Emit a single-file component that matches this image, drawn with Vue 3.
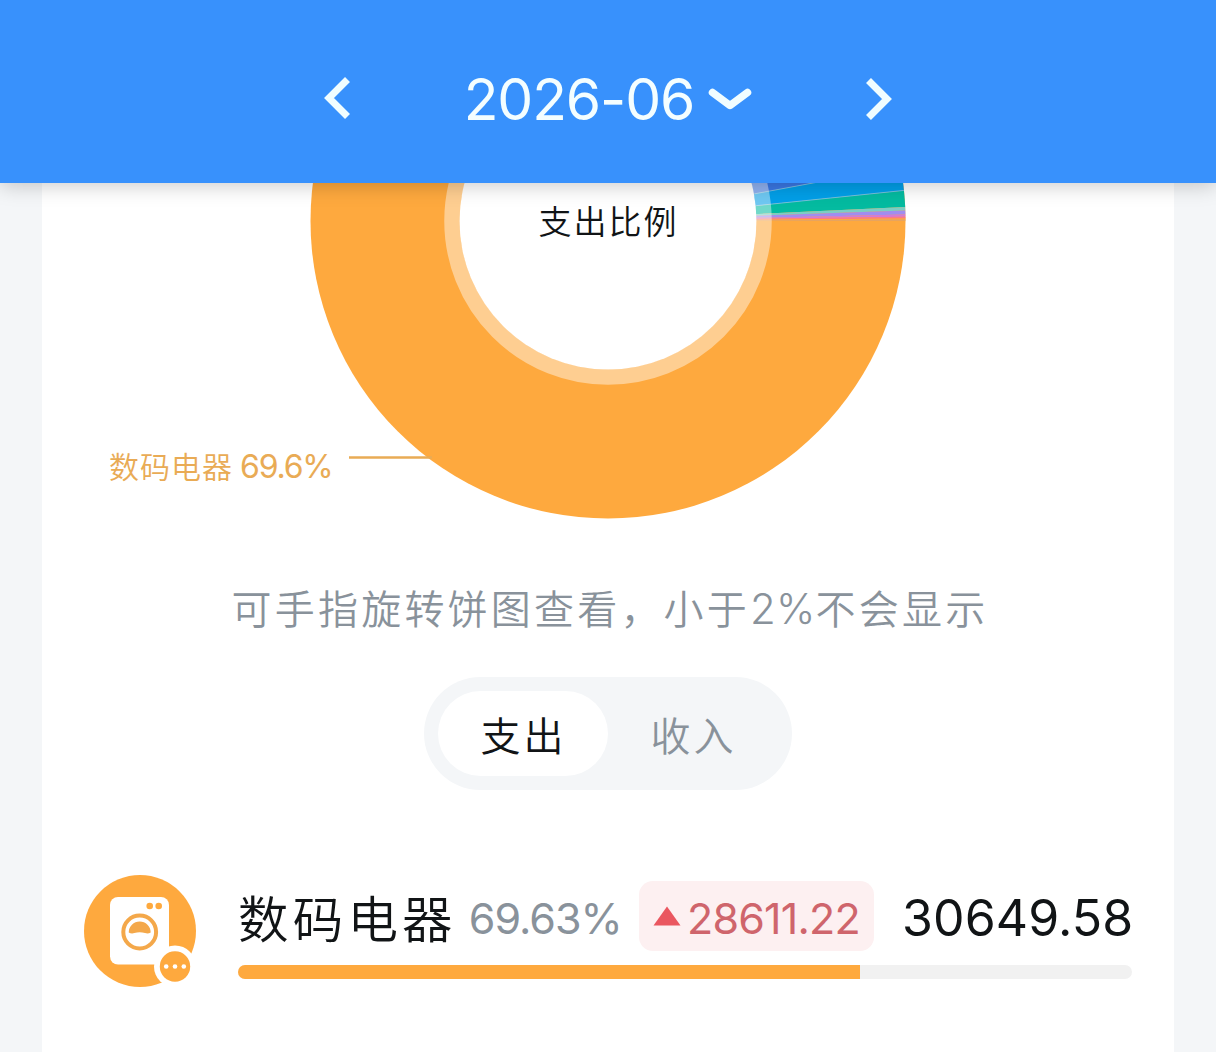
<template>
  <div class="page">
    <header class="top-bar">
      <button class="nav-btn" @click="shiftMonth(-1)">
        <svg width="28" height="44" viewBox="0 0 28 44"><path d="M24.5 3.5 6 22 24.5 40.5" /></svg>
      </button>
      <button class="month">
        <span class="month-text">{{ month }}</span>
        <svg class="month-arrow" width="44" height="26" viewBox="0 0 44 26"><path d="M4.5 4.5 22 17.5 39.5 4.5" /></svg>
      </button>
      <button class="nav-btn next" @click="shiftMonth(1)">
        <svg width="28" height="44" viewBox="0 0 28 44"><path d="M3.5 3.5 22 22 3.5 40.5" /></svg>
      </button>
    </header>

    <main class="card">
      <svg class="chart" width="1132" height="357" viewBox="42 183 1132 357">
        <circle cx="608" cy="221" r="297.5" fill="#fea93e" />
        <path v-for="s in slices" :key="s.from" :d="wedge(s.from, s.to)" :fill="s.color" />
        <path v-for="a in dividers" :key="a" :d="ray(a)" stroke="#7fc4ee" stroke-width="0.8" />
        <circle cx="608" cy="221" r="156" fill="none" stroke="#fff" stroke-opacity="0.43" stroke-width="15.5" />
        <circle cx="608" cy="221" r="148.5" fill="#fff" />
        <path d="M349 457.5H432" stroke="#e9ab55" stroke-width="2.6" />
        <text class="chart-title" x="538.5" y="233.5">支出比例</text>
        <text class="chart-label" x="109" y="477.5">数码电器</text>
        <text class="chart-label num" x="240" y="478">69.6%</text>
      </svg>

      <p class="hint">可手指旋转饼图查看，小于<span class="hint-num">2%</span>不会显示</p>

      <div class="tabs">
        <button v-for="t in tabs" :key="t" class="tab" :class="{ active: t === activeTab }" @click="activeTab = t">{{ t }}</button>
      </div>

      <div v-for="item in items" :key="item.name" class="row">
        <svg class="row-icon" width="114" height="114" viewBox="0 0 114 114">
          <circle cx="57" cy="57" r="56" fill="#fea93e" />
          <rect x="27" y="23" width="59" height="67.5" rx="8" fill="#fff" />
          <circle cx="66.7" cy="32" r="3.3" fill="#fea93e" />
          <circle cx="75.7" cy="32" r="3.3" fill="#fea93e" />
          <circle cx="56.7" cy="58" r="16.4" fill="none" stroke="#f4a84a" stroke-width="4" />
          <path d="M45.7 58.5A11 11 0 0 1 67.7 58.5Q65 60 62 59Q56.7 57.4 51.4 59Q48.5 60 45.7 58.5Z" fill="#f4a84a" />
          <circle cx="92" cy="92.5" r="21" fill="#fff" />
          <circle cx="92" cy="92.5" r="15.2" fill="#fea93e" />
          <circle v-for="x in [83.2, 92, 100.8]" :key="x" :cx="x" cy="92.5" r="2.3" fill="#fff" />
        </svg>
        <div class="row-main">
          <div class="row-line">
            <span class="row-name">{{ item.name }}</span>
            <span class="row-percent">{{ item.percent }}%</span>
            <span class="row-diff">
              <svg width="28" height="20" viewBox="0 0 28 20"><path d="M14 0.5 27.5 19.5H0.5Z" fill="#ea5760" /></svg>
              <span class="diff-num">{{ item.diff }}</span>
            </span>
            <span class="row-amount">{{ item.amount }}</span>
          </div>
          <div class="bar"><div class="bar-fill" :style="{ width: item.percent + '%' }"></div></div>
        </div>
      </div>
    </main>
  </div>
</template>

<script setup>
import { ref } from 'vue'

const month = ref('2026-06')
const tabs = ['支出', '收入']
const activeTab = ref('支出')

const items = [
  { name: '数码电器', percent: '69.63', diff: '28611.22', amount: '30649.58' }
]

// 角度从 3 点钟方向开始，逆时针
const slices = [
  { from: 10.5, to: 40, color: '#3a77e4' },
  { from: 5.9, to: 10.5, color: '#029fe8' },
  { from: 2.7, to: 5.9, color: '#04bba0' },
  { from: 2.0, to: 2.7, color: '#7ccdc4' },
  { from: 1.25, to: 2.0, color: '#a08df0' },
  { from: 0.8, to: 1.25, color: '#d47ad6' },
  { from: 0.5, to: 0.8, color: '#fb7a86' },
  { from: 0.3, to: 0.5, color: '#fea93e' },
  { from: 0.05, to: 0.3, color: '#dfa36c' }
]
const dividers = [5.9, 10.5]

function point(deg, r = 297.5) {
  const a = deg * Math.PI / 180
  return `${608 + r * Math.cos(a)} ${221 - r * Math.sin(a)}`
}

function wedge(from, to) {
  return `M608 221L${point(from)}A297.5 297.5 0 0 0 ${point(to)}Z`
}

function ray(deg) {
  return `M${point(deg, 149)}L${point(deg)}`
}

function shiftMonth(n) {
  const [y, m] = month.value.split('-').map(Number)
  const d = new Date(y, m - 1 + n, 1)
  month.value = `${d.getFullYear()}-${String(d.getMonth() + 1).padStart(2, '0')}`
}
</script>

<style>
body { margin: 0; background: #f4f6f8; }
</style>

<style scoped>
.page {
  height: 1052px; overflow: hidden;
  display: flex; flex-direction: column;
  background: #f4f6f8;
  font-family: Inter, "Noto Sans CJK SC", sans-serif;
  color: #111416;
}
button { border: none; background: none; padding: 0; font: inherit; color: inherit; cursor: pointer; }

.top-bar {
  height: 183px; flex-shrink: 0; box-sizing: border-box;
  padding: 12px 323px 0; position: relative; z-index: 2;
  display: flex; align-items: center; justify-content: space-between;
  background: #3891fc; color: #f4feff;
  box-shadow: 0 2px 20px rgba(0, 0, 0, 0.22);
}
.top-bar svg { display: block; fill: none; stroke: #f0fdff; stroke-width: 7; }
.nav-btn.next { padding-top: 3px; }
.month { display: flex; align-items: center; gap: 14px; }
.month-text { padding-top: 4px; font-size: 57px; line-height: 70px; font-weight: 400; letter-spacing: -1.1px; white-space: nowrap; }
.top-bar .month-arrow { margin-top: 6px; stroke-width: 7.5; stroke-linecap: round; stroke-linejoin: round; }

.card {
  flex: 1; margin: 0 42px; background: #fff;
  display: flex; flex-direction: column; align-items: center;
}
.chart { display: block; }
.chart-title { font-size: 33px; letter-spacing: 2px; fill: #111416; font-weight: 350; }
.chart-label { font-size: 30px; letter-spacing: 1px; fill: #e9ab55; font-weight: 350; }
.chart-label.num { font-size: 32px; letter-spacing: -1.2px; font-weight: 400; }

.hint {
  margin: 39px 0 0; padding-left: 4px; height: 60px; line-height: 60px;
  font-size: 40px; letter-spacing: 3.2px; font-weight: 350;
  color: #89929b; white-space: nowrap;
}
.hint-num { font-size: 42px; letter-spacing: 0.2px; }

.tabs {
  margin-top: 38px; box-sizing: border-box;
  width: 368px; height: 113px; padding: 14px; border-radius: 57px;
  display: flex; background: #f4f6f8;
}
.tab {
  flex: 1; border-radius: 43px;
  font-size: 40px; letter-spacing: 3px; padding-left: 1px; font-weight: 350; color: #89929b;
}
.tab.active { background: #fff; color: #111416; }

.row {
  width: 1048px; margin-top: 84px;
  display: flex; align-items: flex-start; gap: 41px;
}
.row-icon { flex-shrink: 0; margin: -0.5px 0 0 -1px; }
.row-main { flex: 1; padding-top: 7px; }
.row-line { height: 70px; display: flex; align-items: center; white-space: nowrap; }
.row-name { font-size: 50.5px; letter-spacing: 4.2px; font-weight: 350; }
.row-percent { padding-top: 3px; margin-left: 12px; font-size: 43px; font-weight: 400; letter-spacing: -1px; color: #89929b; }
.row-diff {
  margin-left: auto; box-sizing: border-box; width: 235px; height: 70px; padding-left: 14px; border-radius: 14px;
  display: flex; align-items: center; gap: 6px;
  background: #fdf0f1; color: #cf656c;
}
.diff-num { padding-top: 3px; font-size: 43px; font-weight: 400; letter-spacing: -0.8px; }
.row-amount { width: 230px; padding-top: 3px; margin-left: 28px; font-size: 50px; font-weight: 400; letter-spacing: 0.1px; text-align: right; }
.bar { margin-top: 14px; height: 14px; border-radius: 7px; overflow: hidden; background: #f1f1f1; }
.bar-fill { height: 100%; background: #fea93e; }
</style>
